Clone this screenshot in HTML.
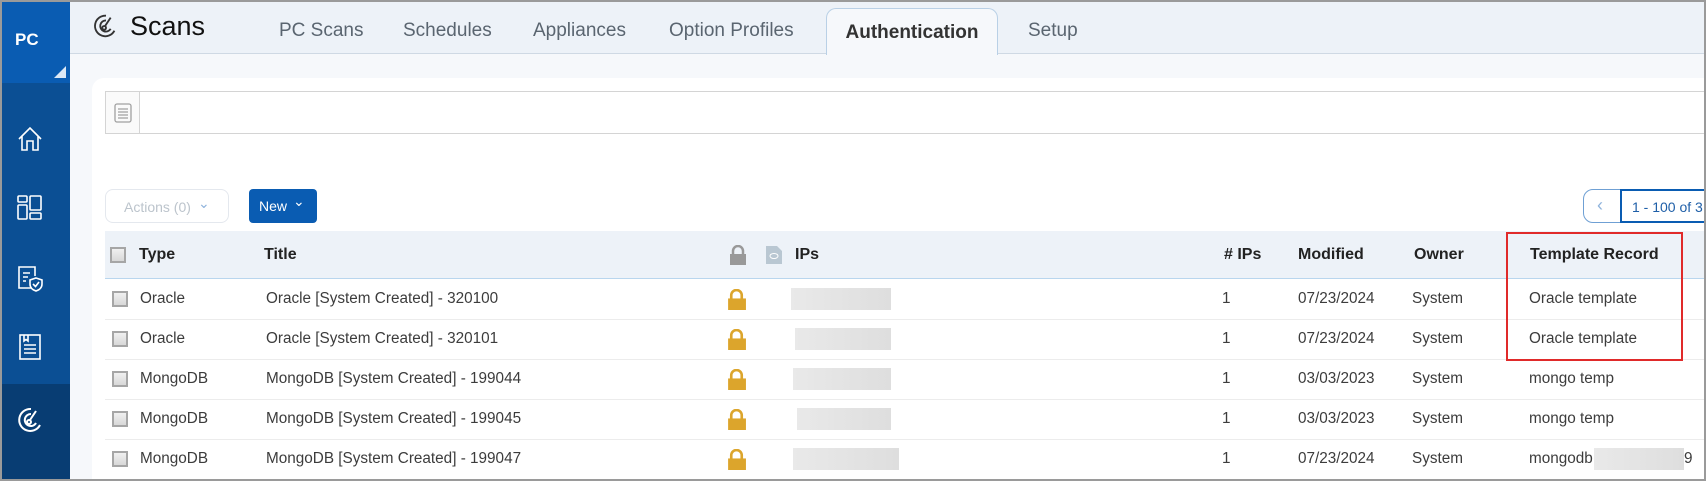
<!DOCTYPE html>
<html><head><style>
*{margin:0;padding:0;box-sizing:border-box}
html,body{width:1706px;height:481px;overflow:hidden}
body{font-family:"Liberation Sans",Arial,sans-serif;background:#f6f8fb;position:relative}
.frame{position:absolute;inset:0;border:2px solid #9a9a9a;z-index:50;pointer-events:none}
.side{position:absolute;left:0;top:0;width:70px;height:481px;background:#0b4f94}
.pc{position:absolute;left:0;top:0;width:70px;height:83px;background:#0a5cb2;color:#fff;font-size:17px;font-weight:bold}
.pc span{position:absolute;left:15px;top:30px}
.tri{position:absolute;right:4px;bottom:5px;width:0;height:0;border-left:12px solid transparent;border-bottom:12px solid #dce8f5}
.act{position:absolute;left:0;top:384px;width:70px;height:97px;background:#083d73}
.ico{position:absolute;left:16px}
.hdr{position:absolute;left:70px;top:0;right:0;height:54px;background:#edf2f8;border-bottom:1px solid #cfd9e4}
.tab{position:absolute;top:20px;font-size:19px;color:#5a6570}
.tabA{position:absolute;left:826px;top:8px;width:172px;height:47px;background:#f6f8fb;border:1px solid #b9d0e6;border-bottom:none;border-radius:10px 10px 0 0;font-size:19px;font-weight:bold;color:#333;text-align:center;padding-top:13px}
.card{position:absolute;left:92px;top:78px;width:1700px;height:420px;background:#fff;border-radius:12px}
.search{position:absolute;left:105px;top:91px;width:1600px;height:43px;border:1px solid #d4d4d4;background:#fff}
.search .b{position:absolute;left:0;top:0;width:34px;height:41px;border-right:1px solid #d4d4d4;background:#fafafa}
.btnA{position:absolute;left:105px;top:189px;width:124px;height:34px;border:1px solid #e4e8ee;border-radius:8px;color:#bcc4cc;font-size:14px;padding:9px 0 0 18px}
.btnN{position:absolute;left:249px;top:189px;width:68px;height:34px;background:#0a5cb2;border-radius:4px;color:#fff;font-size:14px;padding:9px 0 0 10px}
.pag{position:absolute;left:1583px;top:189px;width:140px;height:34px;border:1px solid #6fa0d4;border-radius:10px 0 0 10px}
.pag .n{position:absolute;left:36px;top:-1px;height:34px;width:120px;border:2px solid #0a5cb2;color:#1f5fa8;font-size:14px;padding:8px 0 0 10px}
.th{position:absolute;left:105px;top:231px;width:1600px;height:48px;background:#edf2f8;border-bottom:1px solid #b9d6ee}
.t{position:absolute;font-size:15.3px;color:#3c3c3c;white-space:nowrap}
.h{font-weight:bold;color:#222;font-size:16px}
.cb{position:absolute;width:16px;height:16px;border:2px solid #a6a6a6;background:linear-gradient(#f0f0f0,#d8d8d8)}
.line{position:absolute;left:105px;width:1600px;height:1px;background:#ececec}
.lock{position:absolute;width:19px;height:21px}
.blur{position:absolute;height:22px;background:linear-gradient(90deg,#e9e9e9,#dedede);}
.red{position:absolute;left:1506px;top:232px;width:177px;height:129px;border:2px solid #e02a2a}
</style></head><body>
<div class="side">
 <div class="pc"><span>PC</span><div class="tri"></div></div>
 <div class="act"></div>
 <svg class="ico" style="top:125px" width="28" height="28" viewBox="0 0 28 28" fill="none" stroke="#fff" stroke-width="1.6"><path d="M3 14 L14 3 L25 14 M6 11 V25 H11 V16 H17 V25 H22 V11"/></svg>
 <svg class="ico" style="top:194px" width="28" height="28" viewBox="0 0 28 28" fill="none" stroke="#fff" stroke-width="1.6"><rect x="2" y="2" width="9" height="6" rx="1"/><rect x="2" y="11" width="9" height="14" rx="1"/><rect x="14" y="2" width="11" height="14" rx="1"/><rect x="14" y="19" width="11" height="6" rx="1"/></svg>
 <svg class="ico" style="top:265px" width="28" height="28" viewBox="0 0 28 28" fill="none" stroke="#fff" stroke-width="1.6"><path d="M15 23 H3 V2 H19 V11 M7 8 H14 M7 12 H12 M7 16 H10"/><path d="M20 13 L26 15 V19 C26 23 23 25 20 26 C17 25 14 23 14 19 V15 Z"/><path d="M17 19 L19.5 21.5 L23 17"/></svg>
 <svg class="ico" style="top:333px" width="28" height="28" viewBox="0 0 28 28" fill="none" stroke="#fff" stroke-width="1.6"><rect x="4" y="2" width="20" height="24"/><path d="M8 2 V8 L10 6.5 L12 8 V2 M8 12 H20 M8 16 H20 M8 20 H20"/></svg>
 <svg class="ico" style="top:405px" width="30" height="30" viewBox="0 0 30 30" fill="none" stroke="#fff" stroke-width="2"><path d="M24 20 A11 11 0 1 1 15 4"/><path d="M20 18 A6 6 0 1 1 15 9"/><circle cx="13" cy="17" r="2"/><path d="M14 15 L20 6"/></svg>
</div>
<div class="hdr">
 <svg style="position:absolute;left:22px;top:12px" width="28" height="28" viewBox="0 0 30 30" fill="none" stroke="#333" stroke-width="2"><path d="M24 20 A11 11 0 1 1 15 4"/><path d="M20 18 A6 6 0 1 1 15 9"/><circle cx="13" cy="17" r="2"/><path d="M14 15 L20 6"/></svg>
 <div style="position:absolute;left:60px;top:11px;font-size:27px;color:#111">Scans</div>
 <div class="tab" style="left:209px">PC Scans</div>
 <div class="tab" style="left:333px">Schedules</div>
 <div class="tab" style="left:463px">Appliances</div>
 <div class="tab" style="left:599px">Option Profiles</div>
 <div class="tab" style="left:958px">Setup</div>
</div>
<div class="tabA">Authentication</div>
<div class="card"></div>
<div class="search"><div class="b"><svg style="position:absolute;left:7px;top:10px" width="20" height="22" viewBox="0 0 20 22" fill="none" stroke="#a0a0a0" stroke-width="1.3"><rect x="2" y="2" width="16" height="18" rx="2"/><path d="M5 7H15M5 10H15M5 13H15M5 16H15"/></svg></div></div>
<div class="btnA">Actions (0) <span style="position:absolute;left:92px;top:5px;color:#8fb3dc">&#8964;</span></div>
<div class="btnN">New <span style="position:absolute;left:44px;top:4px">&#8964;</span></div>
<div class="pag"><span style="position:absolute;left:13px;top:5px;color:#8fb3dc;font-size:18px">&#8249;</span><div class="n">1 - 100 of 3</div></div>
<div class="th"></div>
<div class="cb" style="left:110px;top:247px"></div>
<div class="t h" style="left:139px;top:246px">Type</div>
<div class="t h" style="left:264px;top:246px">Title</div>
<svg style="position:absolute;left:729px;top:245px" width="18" height="20" viewBox="0 0 18 20"><path d="M4 9 V6 A5 5 0 0 1 14 6 V9" fill="none" stroke="#999" stroke-width="2.5"/><rect x="1" y="9" width="16" height="11" fill="#999"/></svg>
<svg style="position:absolute;left:766px;top:246px" width="16" height="18" viewBox="0 0 16 18"><path d="M0 0 H11 L16 5 V18 H0Z" fill="#b9c7d2"/><ellipse cx="8" cy="10" rx="4" ry="2.5" fill="none" stroke="#fff" stroke-width="1"/></svg>
<div class="t h" style="left:795px;top:246px">IPs</div>
<div class="t h" style="left:1224px;top:246px"># IPs</div>
<div class="t h" style="left:1298px;top:246px">Modified</div>
<div class="t h" style="left:1414px;top:246px">Owner</div>
<div class="t h" style="left:1530px;top:246px">Template Record</div>
<div id="rows"></div>
<div class="red"></div>
<div class="frame"></div>
<script>
var d=[["Oracle","Oracle [System Created] - 320100","07/23/2024","Oracle template",791,100],
["Oracle","Oracle [System Created] - 320101","07/23/2024","Oracle template",795,96],
["MongoDB","MongoDB [System Created] - 199044","03/03/2023","mongo temp",793,98],
["MongoDB","MongoDB [System Created] - 199045","03/03/2023","mongo temp",797,94],
["MongoDB","MongoDB [System Created] - 199047","07/23/2024","mongodb",793,106]];
var h="";
for(var i=0;i<5;i++){var y=279+i*40,c=y+20,r=d[i];
h+='<div class="cb" style="left:112px;top:'+(c-8)+'px"></div>';
h+='<div class="t" style="left:140px;top:'+(c-9)+'px">'+r[0]+'</div>';
h+='<div class="t" style="left:266px;top:'+(c-9)+'px">'+r[1]+'</div>';
h+='<svg class="lock" style="left:727px;top:'+(c-10)+'px" viewBox="0 0 18 20"><path d="M4 9 V6 A5 5 0 0 1 14 6 V9" fill="none" stroke="#dca52c" stroke-width="2.5"/><rect x="1" y="9" width="17" height="11" fill="#dca52c"/></svg>';
h+='<div class="blur" style="left:'+r[4]+'px;top:'+(c-11)+'px;width:'+r[5]+'px"></div>';
h+='<div class="t" style="left:1222px;top:'+(c-9)+'px">1</div>';
h+='<div class="t" style="left:1298px;top:'+(c-9)+'px">'+r[2]+'</div>';
h+='<div class="t" style="left:1412px;top:'+(c-9)+'px">System</div>';
h+='<div class="t" style="left:1529px;top:'+(c-9)+'px">'+r[3]+'</div>';
if(i==4){h+='<div class="blur" style="left:1594px;top:'+(c-11)+'px;width:90px"></div><div class="t" style="left:1684px;top:'+(c-9)+'px">9</div>';}
h+='<div class="line" style="top:'+(y+40)+'px"></div>';}
document.getElementById("rows").innerHTML=h;
</script>
</body></html>
